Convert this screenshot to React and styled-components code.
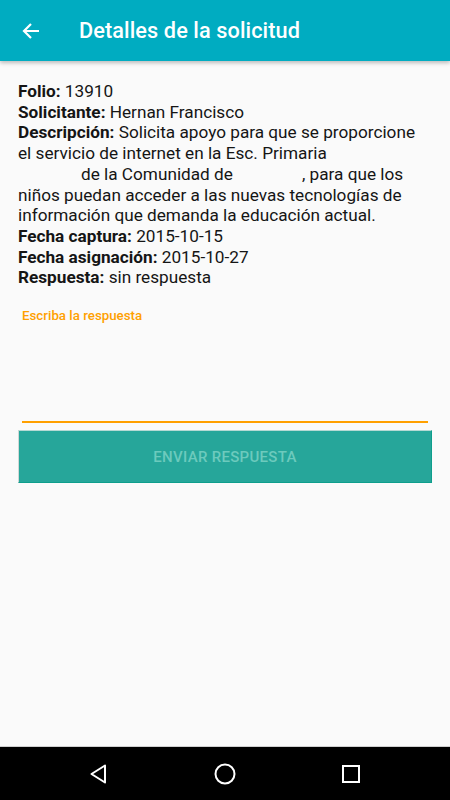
import React from "react";
import styled, { createGlobalStyle } from "styled-components";

const Global = createGlobalStyle`
  html, body { margin: 0; padding: 0; }
  body { background: #fafafa; font-family: Roboto, "Noto Sans", sans-serif; }
`;

const Screen = styled.div`
  width: 450px;
  height: 800px;
  display: flex;
  flex-direction: column;
  background: #fafafa;
  overflow: hidden;
`;

const AppBar = styled.header`
  height: 61px;
  flex: none;
  background: #00acc1;
  display: flex;
  align-items: center;
  box-shadow: 0 2px 4px rgba(0,0,0,0.25);
  position: relative;
  z-index: 1;
`;

const BackButton = styled.div`
  width: 18px;
  height: 18px;
  margin-left: 22px;
  margin-right: 39px;
  display: flex;
`;

const Title = styled.h1`
  margin: 0;
  color: #fff;
  font-size: 21.7px;
  font-weight: 500;
  letter-spacing: 0.1px;
`;

const Content = styled.main`
  flex: 1;
  padding: 20px 18px 0 18px;
  display: flex;
  flex-direction: column;
`;

const Details = styled.div`
  font-size: 17.2px;
  line-height: 20.7px;
  color: #151515;
  white-space: nowrap;
`;

const Line = styled.div``;

const Label = styled.span`
  font-weight: 700;
`;

const Gap = styled.span`
  display: inline-block;
  width: ${(p) => p.$w}px;
`;

const Field = styled.div`
  margin-top: 20px;
  padding: 0 4px;
  display: flex;
  flex-direction: column;
`;

const FieldLabel = styled.label`
  color: #ffa000;
  font-size: 13.3px;
  font-weight: 500;
  line-height: 16px;
`;

const TextArea = styled.div`
  height: 97px;
  border-bottom: 2px solid #ffa000;
`;

const SendButton = styled.button`
  margin-top: 7px;
  height: 53px;
  width: 100%;
  background: #26a69a;
  border: 1px solid #0e9e8c;
  border-left-color: #d0d8d6;
  border-top-color: #b6d9d4;
  color: #6ccabd;
  font-family: Roboto, sans-serif;
  font-size: 15px;
  font-weight: 500;
  letter-spacing: 0.3px;
  padding: 0;
`;

const Spacer = styled.div`
  flex: 1;
`;

const NavBar = styled.nav`
  height: 53px;
  flex: none;
  background: #000;
  display: flex;
  align-items: center;
  justify-content: center;
  gap: 104px;
  border-top: 1px solid #cfcfcf;
`;

const NavIcon = styled.svg`
  width: 22px;
  height: 22px;
  display: block;
`;

export default function App() {
  return (
    <>
      <Global />
      <Screen>
        <AppBar>
          <BackButton>
            <svg width="18" height="18" viewBox="0 0 18 18">
              <path d="M17 9H2M9 2L2 9l7 7" fill="none" stroke="#fff" strokeWidth="2.2" />
            </svg>
          </BackButton>
          <Title>Detalles de la solicitud</Title>
        </AppBar>
        <Content>
          <Details>
            <Line><Label>Folio:</Label> 13910</Line>
            <Line><Label>Solicitante:</Label> Hernan Francisco</Line>
            <Line>
              <Label>Descripción:</Label> Solicita apoyo para que se proporcione<br />
              el servicio de internet en la Esc. Primaria<br />
              <Gap $w={63} />de la Comunidad de<Gap $w={69} />, para que los<br />
              niños puedan acceder a las nuevas tecnologías de<br />
              información que demanda la educación actual.
            </Line>
            <Line><Label>Fecha captura:</Label> 2015-10-15</Line>
            <Line><Label>Fecha asignación:</Label> 2015-10-27</Line>
            <Line><Label>Respuesta:</Label> sin respuesta</Line>
          </Details>
          <Field>
            <FieldLabel>Escriba la respuesta</FieldLabel>
            <TextArea />
          </Field>
          <SendButton>ENVIAR RESPUESTA</SendButton>
          <Spacer />
        </Content>
        <NavBar>
          <NavIcon viewBox="0 0 22 22">
            <path d="M17 2.5L3.5 11 17 19.5Z" fill="none" stroke="#fff" strokeWidth="2" strokeLinejoin="round" />
          </NavIcon>
          <NavIcon viewBox="0 0 22 22">
            <circle cx="11" cy="11" r="9.5" fill="none" stroke="#fff" strokeWidth="2" />
          </NavIcon>
          <NavIcon viewBox="0 0 22 22">
            <rect x="3" y="3" width="16" height="16" fill="none" stroke="#fff" strokeWidth="2" />
          </NavIcon>
        </NavBar>
      </Screen>
    </>
  );
}
